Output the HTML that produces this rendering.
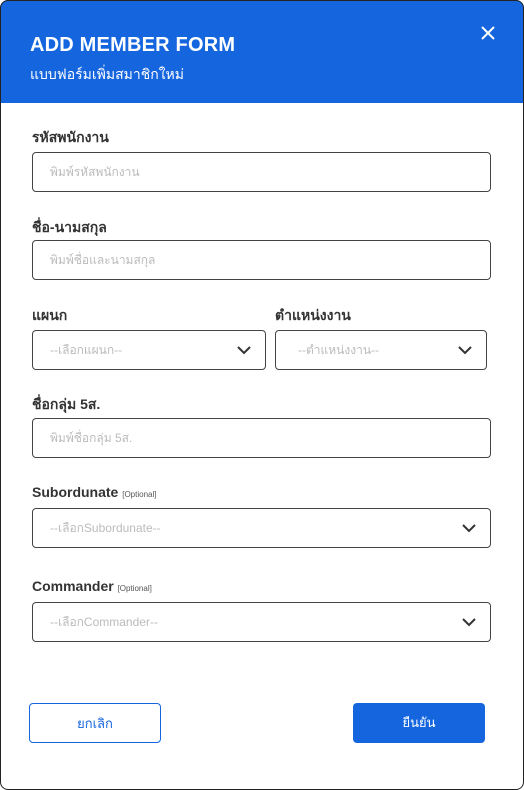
<!DOCTYPE html>
<html><head><meta charset="utf-8"><style>
*{box-sizing:border-box;margin:0;padding:0}
body{width:524px;height:790px;background:#fff;font-family:"Liberation Sans","DejaVu Sans",sans-serif;position:relative;overflow:hidden}
.card{position:absolute;left:0;top:0;width:524px;height:790px;border-radius:8px;overflow:hidden}
.bd{position:absolute;left:0;top:0;width:524px;height:790px;border:1px solid #222;border-radius:8px;pointer-events:none}
.hd{position:absolute;left:0;top:0;width:524px;height:103px;background:#1565df;color:#fff}
.t{position:absolute;left:30px;top:34px;font-size:20px;font-weight:bold;letter-spacing:.2px}
.s{position:absolute;left:30px;top:64px;font-size:14px}
.x{position:absolute;left:480px;top:25px}
.l{position:absolute;left:32px;font-size:14px;font-weight:bold;color:#333}
.l small{font-size:8px;font-weight:normal;color:#555}
.i{position:absolute;height:40px;border:1px solid #444;border-radius:4px;font-size:12px;color:#bbb;padding-left:17px;line-height:38px}
.i svg{position:absolute;right:13px;top:14px}
.b{position:absolute;top:703px;width:132px;height:40px;border-radius:4px;font-size:13px;text-align:center;line-height:40px}
</style></head><body><div class="card">
<div class="hd"><div class="t">ADD MEMBER FORM</div><div class="s">แบบฟอร์มเพิ่มสมาชิกใหม่</div>
<svg class="x" width="16" height="16" viewBox="0 0 16 16"><path d="M2 2L14 14M14 2L2 14" stroke="#fff" stroke-width="2"/></svg></div>
<div class="l" style="top:127px">รหัสพนักงาน</div>
<div class="i" style="left:32px;top:152px;width:459px">พิมพ์รหัสพนักงาน</div>
<div class="l" style="top:217px">ชื่อ-นามสกุล</div>
<div class="i" style="left:32px;top:240px;width:459px">พิมพ์ชื่อและนามสกุล</div>
<div class="l" style="top:305px">แผนก</div>
<div class="l" style="top:305px;left:275px">ตำแหน่งงาน</div>
<div class="i" style="left:32px;top:330px;width:234px">--เลือกแผนก--<svg width="16" height="10" viewBox="0 0 16 10"><path d="M2 2L8 8L14 2" stroke="#333" stroke-width="2" fill="none"/></svg></div>
<div class="i" style="left:275px;top:330px;width:212px;padding-left:22px">--ตำแหน่งงาน--<svg width="16" height="10" viewBox="0 0 16 10"><path d="M2 2L8 8L14 2" stroke="#333" stroke-width="2" fill="none"/></svg></div>
<div class="l" style="top:394px">ชื่อกลุ่ม 5ส.</div>
<div class="i" style="left:32px;top:418px;width:459px">พิมพ์ชื่อกลุ่ม 5ส.</div>
<div class="l" style="top:484px">Subordunate <small>[Optional]</small></div>
<div class="i" style="left:32px;top:508px;width:459px">--เลือกSubordunate--<svg width="16" height="10" viewBox="0 0 16 10"><path d="M2 2L8 8L14 2" stroke="#333" stroke-width="2" fill="none"/></svg></div>
<div class="l" style="top:578px">Commander <small>[Optional]</small></div>
<div class="i" style="left:32px;top:602px;width:459px">--เลือกCommander--<svg width="16" height="10" viewBox="0 0 16 10"><path d="M2 2L8 8L14 2" stroke="#333" stroke-width="2" fill="none"/></svg></div>
<div class="b" style="left:29px;border:1px solid #1565df;color:#1565df">ยกเลิก</div>
<div class="b" style="left:353px;background:#1565df;color:#fff">ยืนยัน</div>
</div><div class="bd"></div></body></html>
